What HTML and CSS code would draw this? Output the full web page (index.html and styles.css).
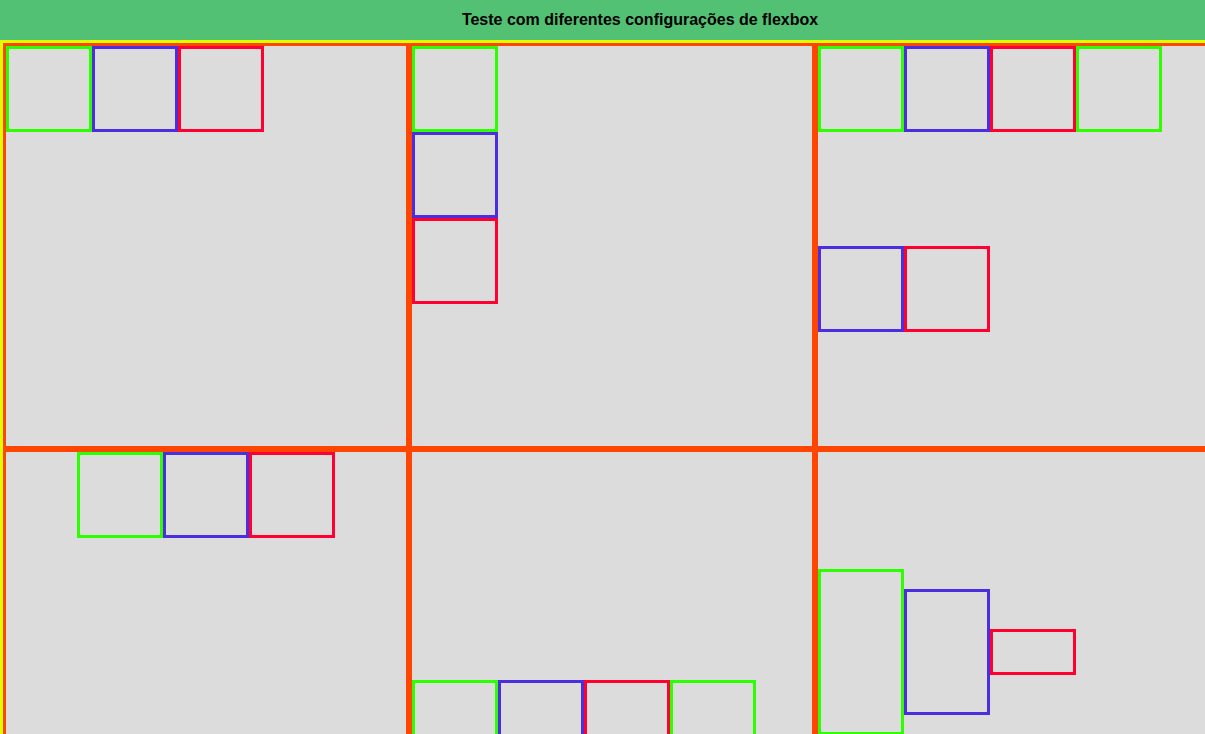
FILE: index.html
```html
<!DOCTYPE html>
<html lang="pt-BR">
<head>
<meta charset="utf-8">
<title>Teste com diferentes configurações de flexbox</title>
<link rel="stylesheet" href="styles.css">
</head>
<body>
<div class="page">
  <header class="header">Teste com diferentes configurações de flexbox</header>
  <main class="board">
    <section class="cell">
      <div class="box green"></div>
      <div class="box blue"></div>
      <div class="box red"></div>
    </section>
    <section class="cell cell-column">
      <div class="box green"></div>
      <div class="box blue"></div>
      <div class="box red"></div>
    </section>
    <section class="cell cell-wrap">
      <div class="box green"></div>
      <div class="box blue"></div>
      <div class="box red"></div>
      <div class="box green"></div>
      <div class="box blue"></div>
      <div class="box red"></div>
    </section>
    <section class="cell cell-center">
      <div class="box green"></div>
      <div class="box blue"></div>
      <div class="box red"></div>
    </section>
    <section class="cell cell-wrap cell-end">
      <div class="box green"></div>
      <div class="box blue"></div>
      <div class="box red"></div>
      <div class="box green"></div>
      <div class="box blue"></div>
      <div class="box red"></div>
    </section>
    <section class="cell cell-middle">
      <div class="box green tall"></div>
      <div class="box blue medium"></div>
      <div class="box red short"></div>
    </section>
  </main>
</div>
</body>
</html>
```
FILE: styles.css
```css
html, body {
  margin: 0;
  padding: 0;
  overflow: hidden;
}

body {
  font-family: "Liberation Sans", Arial, sans-serif;
  background: #ffffff;
}

.page {
  width: 1280px;
}

.header {
  height: 40px;
  background: #52c174;
  color: #000000;
  font-weight: bold;
  font-size: 16px;
  display: flex;
  align-items: center;
  justify-content: center;
}

.board {
  display: grid;
  grid-template-columns: repeat(3, 406px);
  border: 3px solid #dfff00;
  background: #ffffff;
  width: max-content;
}

.cell {
  width: 400px;
  height: 400px;
  border: 3px solid #ff4500;
  background: #dcdcdc;
  display: flex;
}

.cell-column {
  flex-direction: column;
}

.cell-wrap {
  flex-wrap: wrap;
}

.cell-end {
  align-content: flex-end;
}

.cell-center {
  justify-content: center;
}

.cell-middle {
  align-items: center;
}

.box {
  width: 80px;
  height: 80px;
  border: 3px solid;
  flex-shrink: 0;
}

.green { border-color: #2eff00; }
.blue { border-color: #4b2ee0; }
.red { border-color: #ff0030; }

.tall { height: 160px; }
.medium { height: 120px; }
.short { height: 40px; }
```
